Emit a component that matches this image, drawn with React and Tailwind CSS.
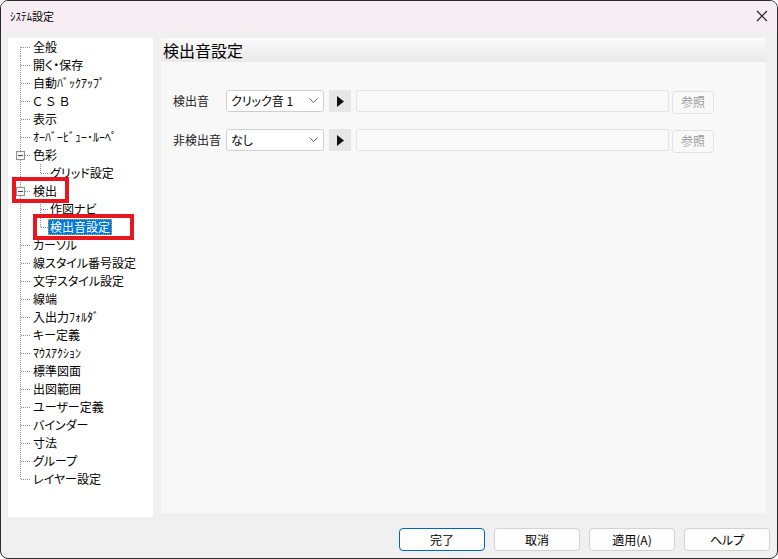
import React from 'react';

const FONT = "font-['Meiryo_UI','Noto_Sans_CJK_JP','Noto_Sans',sans-serif] [font-feature-settings:'palt']";

// tree rows: level, label, expandable, last-in-level, selected
const TREE = [
  { label: '全般' },
  { label: '開く・保存' },
  { label: '自動ﾊﾞｯｸｱｯﾌﾟ' },
  { label: 'ＣＳＢ', wide: true },
  { label: '表示' },
  { label: 'ｵｰﾊﾞｰﾋﾞｭｰ･ﾙｰﾍﾟ' },
  { label: '色彩', box: true },
  { label: 'グリッド設定', child: true, lastChild: true },
  { label: '検出', box: true },
  { label: '作図ナビ', child: true },
  { label: '検出音設定', child: true, lastChild: true, selected: true },
  { label: 'カーソル' },
  { label: '線スタイル番号設定' },
  { label: '文字スタイル設定' },
  { label: '線端' },
  { label: '入出力ﾌｫﾙﾀﾞ' },
  { label: 'キー定義' },
  { label: 'ﾏｳｽｱｸｼｮﾝ' },
  { label: '標準図面' },
  { label: '出図範囲' },
  { label: 'ユーザー定義' },
  { label: 'バインダー' },
  { label: '寸法' },
  { label: 'グループ' },
  { label: 'レイヤー設定' },
];

const Connector = ({ row, first, last }) => {
  const w = row.child ? 40 : 23;
  return (
    <svg width={w} height="18" className="shrink-0" shapeRendering="crispEdges">
      <g stroke="#8a8a8a" strokeWidth="1" strokeDasharray="1 1" fill="none">
        {/* top-level trunk */}
        <line x1="12.5" y1={first ? 9 : 0} x2="12.5" y2={last ? 9 : 18} />
        {!row.child && <line x1="13" y1="9.5" x2="22" y2="9.5" />}
        {row.child && (
          <>
            <line x1="32.5" y1="0" x2="32.5" y2={row.lastChild ? 9 : 18} />
            <line x1="33" y1="9.5" x2="40" y2="9.5" />
          </>
        )}
      </g>
      {row.box && (
        <g>
          <rect x="8.5" y="5.5" width="8" height="8" fill="#f4f4f4" stroke="#919191" />
          <line x1="10" y1="9.5" x2="15" y2="9.5" stroke="#2b4a78" />
        </g>
      )}
    </svg>
  );
};

const TreeRow = ({ row, first, last }) => (
  <div className="flex items-center h-[18px]">
    <Connector row={row} first={first} last={last} />
    <span
      className={`px-[2px] leading-[16px] text-[12px] whitespace-nowrap ${
        row.selected ? 'bg-[#0078d7] text-white outline outline-1 outline-dotted outline-[#d9a63a] -outline-offset-1' : 'text-black'
      } ${row.wide ? 'tracking-[4px]' : ''}`}
    >
      {row.label}
    </span>
  </div>
);

const Combo = ({ value }) => (
  <div className="w-[98px] h-[22px] bg-white border border-[#cfcfcf] rounded-[3px] flex items-center justify-between pl-[4px] pr-[5px]">
    <span className="text-[12px] text-black">{value}</span>
    <svg width="9" height="6" viewBox="0 0 9 6">
      <path d="M0.5 0.5 L4.5 4.5 L8.5 0.5" stroke="#666" fill="none" strokeWidth="1" />
    </svg>
  </div>
);

const SoundRow = ({ label, value }) => (
  <div className="flex items-center h-[22px]">
    <span className="w-[53px] text-[12px] text-[#222]">{label}</span>
    <Combo value={value} />
    <div className="ml-[5px] w-[22px] h-[22px] bg-[#e6e6e6] flex items-center justify-center">
      <svg width="7" height="11" viewBox="0 0 7 11">
        <path d="M0 0 L7 5.5 L0 11 Z" fill="#111" />
      </svg>
    </div>
    <div className="ml-[5px] w-[313px] h-[22px] border border-[#e3e3e3] rounded-[2px] bg-[#f9f9f9]" />
    <div className="ml-[3px] mt-[2px] w-[42px] h-[23px] border border-[#e2e2e2] rounded-[4px] bg-[#f9f9f9] flex items-center justify-center text-[12px] text-[#9c9c9c]">
      参照
    </div>
  </div>
);

const FooterButton = ({ children, primary }) => (
  <div
    className={`w-[86px] h-[23px] rounded-[4px] flex items-center justify-center text-[12px] text-black bg-[#fdfdfd] border ${
      primary ? 'border-[#0067c0]' : 'border-[#d2d2d2]'
    }`}
  >
    {children}
  </div>
);

export default function App() {
  return (
    <div className={`${FONT} w-[778px] h-[559px] bg-[#f0f0f0] border border-[#2b2b2b] rounded-[8px] overflow-hidden relative flex flex-col`}>
      {/* title bar */}
      <div className="h-[30px] shrink-0 bg-[#f7eef4] flex items-center justify-between pl-[9px] pr-[9px]">
        <span className="text-[11px] text-black">ｼｽﾃﾑ設定</span>
        <svg width="12" height="12" viewBox="0 0 12 12">
          <path d="M1 1 L11 11 M11 1 L1 11" stroke="#1a1a1a" strokeWidth="1.1" />
        </svg>
      </div>

      <div className="flex gap-[8px] pl-[7px] pr-[11px] pt-[7px]">
        {/* tree */}
        <div className="w-[145px] h-[479px] bg-white shrink-0">
          {TREE.map((row, i) => (
            <TreeRow key={row.label} row={row} first={i === 0} last={i === TREE.length - 1} />
          ))}
        </div>

        {/* settings panel */}
        <div className="flex-1 h-[475px] bg-[#f8f8f8] flex flex-col">
          <div className="h-[24px] bg-gradient-to-b from-[#fbfbfb] to-[#e9e9e9] flex items-center pl-[2px]">
            <span className="text-[16px] leading-[20px] text-black">検出音設定</span>
          </div>
          <div className="pl-[12px] pt-[28px] flex flex-col gap-[17px]">
            <SoundRow label="検出音" value="クリック音 1" />
            <SoundRow label="非検出音" value="なし" />
          </div>
        </div>
      </div>

      {/* footer buttons */}
      <div className="flex justify-end gap-[9px] pr-[7px] mt-[11px]">
        <FooterButton primary>完了</FooterButton>
        <FooterButton>取消</FooterButton>
        <FooterButton>適用(A)</FooterButton>
        <FooterButton>ヘルプ</FooterButton>
      </div>

      {/* red annotation boxes */}
      <div className="absolute left-[11px] top-[176px] w-[57px] h-[26px] border-[4px] border-[#e8161f]" />
      <div className="absolute left-[32px] top-[213px] w-[101px] h-[26px] border-[4px] border-[#e8161f]" />
    </div>
  );
}
